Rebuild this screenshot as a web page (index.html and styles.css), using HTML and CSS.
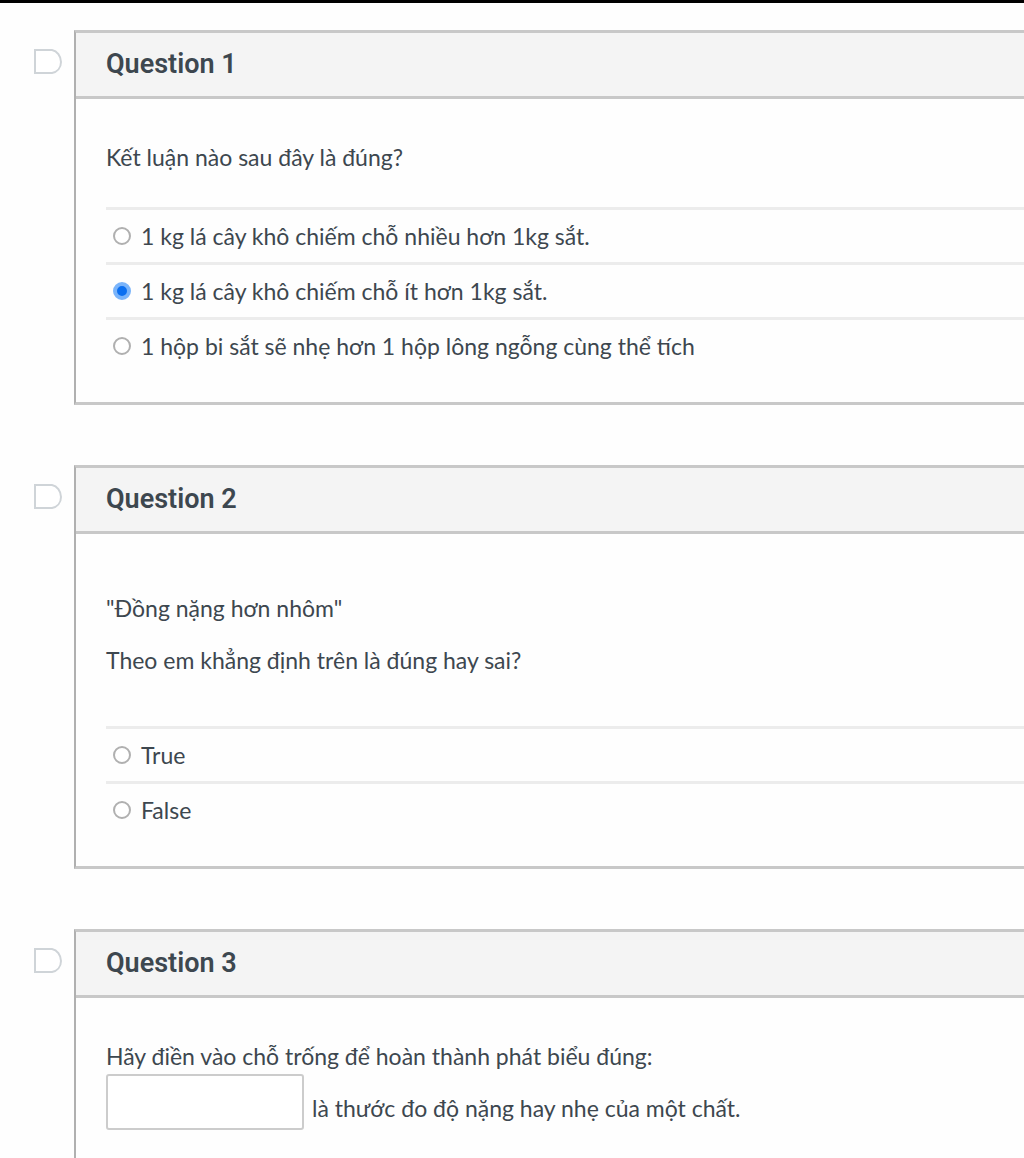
FILE: index.html
```html
<!DOCTYPE html>
<html lang="vi">
<head>
    <meta charset="UTF-8">
    <meta name="viewport" content="width=device-width, initial-scale=1.0">
    <title>Quiz</title>
    <link rel="stylesheet" href="styles.css">
</head>
<body>

    <main class="quiz">
        <!-- Question 1 -->
        <section class="question-row">
            <button type="button" class="flag" aria-label="Flag question 1">
                <svg width="30" height="28" viewBox="0 0 30 28"><path d="M2 2H19C24 3 28 8 28 14S24 24 19 25H2Z"/></svg>
            </button>
            <div class="question">
                <h2>Question 1</h2>
                <div class="content">
                    <div class="question-text">
                        <p>Kết luận nào sau đây là đúng?</p>
                    </div>
                    <div class="answers">
                        <label class="answer"><input type="radio" name="q1"> 1 kg lá cây khô chiếm chỗ nhiều hơn 1kg sắt.</label>
                        <label class="answer"><input type="radio" name="q1" checked> 1 kg lá cây khô chiếm chỗ ít hơn 1kg sắt.</label>
                        <label class="answer"><input type="radio" name="q1"> 1 hộp bi sắt sẽ nhẹ hơn 1 hộp lông ngỗng cùng thể tích</label>
                    </div>
                </div>
            </div>
        </section>

        <!-- Question 2 -->
        <section class="question-row">
            <button type="button" class="flag" aria-label="Flag question 2">
                <svg width="30" height="28" viewBox="0 0 30 28"><path d="M2 2H19C24 3 28 8 28 14S24 24 19 25H2Z"/></svg>
            </button>
            <div class="question">
                <h2>Question 2</h2>
                <div class="content">
                    <div class="question-text spaced">
                        <p>"Đồng nặng hơn nhôm"</p>
                        <p>Theo em khẳng định trên là đúng hay sai?</p>
                    </div>
                    <div class="answers">
                        <label class="answer"><input type="radio" name="q2"> True</label>
                        <label class="answer"><input type="radio" name="q2"> False</label>
                    </div>
                </div>
            </div>
        </section>

        <!-- Question 3 -->
        <section class="question-row">
            <button type="button" class="flag" aria-label="Flag question 3">
                <svg width="30" height="28" viewBox="0 0 30 28"><path d="M2 2H19C24 3 28 8 28 14S24 24 19 25H2Z"/></svg>
            </button>
            <div class="question">
                <h2>Question 3</h2>
                <div class="content">
                    <div class="question-text">
                        <p>Hãy điền vào chỗ trống để hoàn thành phát biểu đúng:</p>
                        <div class="blank-line">
                            <input type="text" id="blank">
                            <label for="blank">là thước đo độ nặng hay nhẹ của một chất.</label>
                        </div>
                    </div>
                </div>
            </div>
        </section>
    </main>

</body>
</html>
```

FILE: styles.css
```css
* {
    margin: 0;
    padding: 0;
    box-sizing: border-box;
}
body {
    background: #fefefe;
    border-top: 3px solid #000;
    color: #3d474f;
    font-family: Lato, sans-serif;
    font-size: 23px;
    line-height: 36px;
    overflow-x: hidden;
}
.quiz {
    display: flex;
    flex-direction: column;
    gap: 60px;
    padding: 27px 0 0 33px;
}
.question-row {
    display: flex;
    align-items: flex-start;
    gap: 11px;
}
.flag {
    flex: none;
    height: 28px;
    margin-top: 18px;
    background: none;
    border: none;
    cursor: pointer;
}
.flag svg {
    display: block;
    fill: #fff;
    stroke: #cfd4d8;
    stroke-width: 2;
}
/* Cards run off the right edge */
.question {
    flex: 1;
    border: 3px solid #c8c8c8;
    border-left: 2px solid #b0b0b0;
    border-right: none;
}
.question h2 {
    background: #f4f4f4;
    border-bottom: 3px solid #c8c8c8;
    padding: 0 30px;
    font-family: Roboto, sans-serif;
    font-size: 27px;
    font-weight: 600;
    line-height: 63px;
}
.content {
    padding: 40px 0 30px 30px;
}
.question-text {
    margin-bottom: 32px;
}
.spaced {
    display: flex;
    flex-direction: column;
    gap: 16px;
    margin: 16px 0 48px;
}
.answer {
    display: flex;
    align-items: center;
    gap: 10px;
    height: 55px;
    padding-left: 7px;
    border-top: 3px solid #ececec;
}
.answer input {
    appearance: none;
    width: 18px;
    height: 18px;
    background: #fff;
    border: 2px solid #b0b0b0;
    border-radius: 50%;
}
.answer input:checked {
    background: #0b6ff0;
    border: 4px solid #7ab4fa;
}
.blank-line {
    display: flex;
    align-items: center;
    gap: 8px;
}
.blank-line input {
    width: 198px;
    height: 56px;
    padding: 0 12px;
    background: #fff;
    border: 2px solid #ccc;
    border-radius: 3px;
    color: inherit;
    font: inherit;
}
.blank-line label {
    padding-top: 12px;
}
```
